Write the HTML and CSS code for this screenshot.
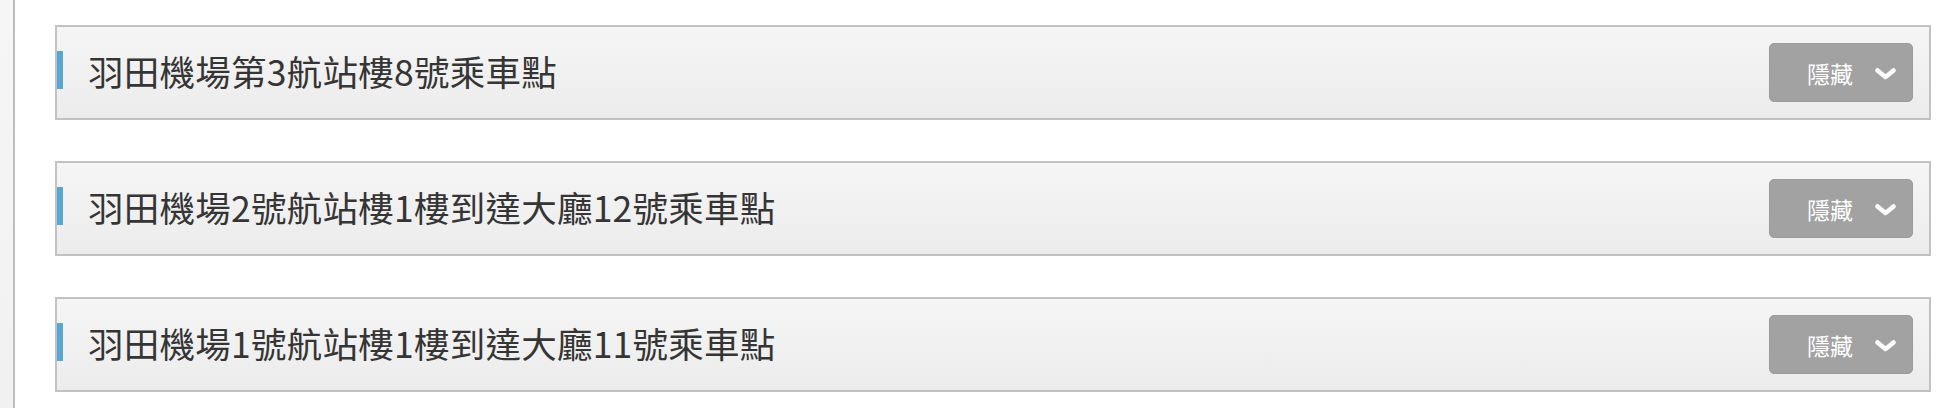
FILE: index.html
```html
<!DOCTYPE html>
<html lang="zh-Hant">
<head>
  <meta charset="UTF-8" />
  <title>乘車點</title>
  <link rel="stylesheet" href="styles.css">
</head>
<body>
  <div class="side"></div>
  <div class="main">
    <div class="panel">
      <span class="mark"></span>
      <h3 class="panel-title">羽田機場第3航站樓8號乘車點</h3>
      <button class="toggle">隱藏
        <svg class="chev" width="21" height="12" viewBox="0 0 21 12"><polyline points="2.5,2.5 10.5,9 18.5,2.5" /></svg>
      </button>
    </div>
    <div class="panel">
      <span class="mark"></span>
      <h3 class="panel-title">羽田機場2號航站樓1樓到達大廳12號乘車點</h3>
      <button class="toggle">隱藏
        <svg class="chev" width="21" height="12" viewBox="0 0 21 12"><polyline points="2.5,2.5 10.5,9 18.5,2.5" /></svg>
      </button>
    </div>
    <div class="panel">
      <span class="mark"></span>
      <h3 class="panel-title">羽田機場1號航站樓1樓到達大廳11號乘車點</h3>
      <button class="toggle">隱藏
        <svg class="chev" width="21" height="12" viewBox="0 0 21 12"><polyline points="2.5,2.5 10.5,9 18.5,2.5" /></svg>
      </button>
    </div>
  </div>
</body>
</html>
```

FILE: styles.css
```css
* {
  box-sizing: border-box;
}
html, body {
  margin: 0;
  height: 100%;
}
body {
  display: flex;
  background: #fff;
  font-family: "Noto Sans CJK TC", "Noto Sans", sans-serif;
  color: #333;
  overflow: hidden;
}
.side {
  width: 15px;
  flex: none;
  background: linear-gradient(180deg, #f6f6f6, #f1f1f1);
  border-right: 2px solid #bdbdbd;
}
.main {
  flex: 1;
  padding: 25px 19px 0 40px;
}
.panel {
  display: flex;
  align-items: center;
  height: 95px;
  margin-bottom: 41px;
  border: 2px solid #c2c2c2;
  background: linear-gradient(180deg, #f5f5f5, #ececec);
}
.mark {
  width: 6px;
  height: 38px;
  margin-bottom: 5px;
  background: #58a7d1;
  flex: none;
}
.panel-title {
  margin: 0 0 3px 25px;
  font-size: 35.5px;
  font-weight: 400;
  letter-spacing: 0.25px;
  color: #353535;
  line-height: 1;
}
.toggle {
  display: flex;
  align-items: center;
  margin-left: auto;
  margin-right: 16px;
  width: 144px;
  height: 59px;
  padding: 0 0 0 37px;
  border: 1px solid #9b9b9b;
  border-radius: 5px;
  background: #a2a2a2;
  color: #fff;
  font-family: "Noto Sans CJK TC", sans-serif;
  font-size: 23px;
  cursor: pointer;
}
.chev {
  margin-left: 22px;
  margin-top: 2px;
}
.chev polyline {
  fill: none;
  stroke: #fff;
  stroke-width: 4.5;
  stroke-linecap: round;
  stroke-linejoin: round;
}
```
